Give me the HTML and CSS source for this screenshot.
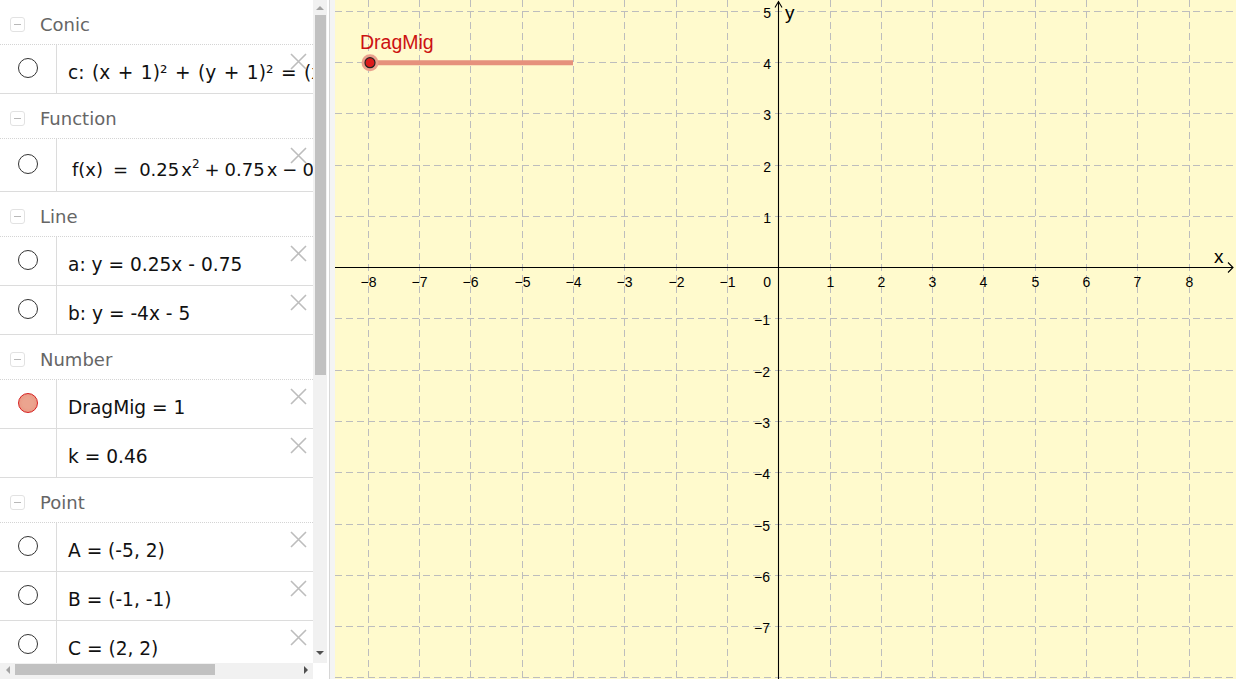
FILE: index.html
```html
<!DOCTYPE html>
<html>
<head>
<meta charset="utf-8">
<link rel="stylesheet" href="styles.css">
</head>
<body>
<div class="app">
  <div class="algebra">
    <div class="list">
      <div class="header"><span class="toggle"></span><span class="htext">Conic</span></div>
      <div class="item">
        <div class="mark"><span class="radio"></span></div>
        <div class="def wide">c: (x + 1)² + (y + 1)² = (x</div>
        <svg class="close" width="17" height="17" viewBox="0 0 17 17"><path d="M1 1L16 16M16 1L1 16"/></svg>
      </div>

      <div class="header"><span class="toggle"></span><span class="htext">Function</span></div>
      <div class="item tall">
        <div class="mark"><span class="radio"></span></div>
        <div class="def fx">f(x)<span class="eq">=</span>0.25<span class="th"></span>x<sup>2</sup><span class="op">+</span>0.75<span class="th"></span>x<span class="op">−</span>0.5</div>
        <svg class="close" width="17" height="17" viewBox="0 0 17 17"><path d="M1 1L16 16M16 1L1 16"/></svg>
      </div>

      <div class="header"><span class="toggle"></span><span class="htext">Line</span></div>
      <div class="item">
        <div class="mark"><span class="radio"></span></div>
        <div class="def">a: y = 0.25x - 0.75</div>
        <svg class="close" width="17" height="17" viewBox="0 0 17 17"><path d="M1 1L16 16M16 1L1 16"/></svg>
      </div>
      <div class="item">
        <div class="mark"><span class="radio"></span></div>
        <div class="def">b: y = -4x - 5</div>
        <svg class="close" width="17" height="17" viewBox="0 0 17 17"><path d="M1 1L16 16M16 1L1 16"/></svg>
      </div>

      <div class="header"><span class="toggle"></span><span class="htext">Number</span></div>
      <div class="item">
        <div class="mark"><span class="radio on"></span></div>
        <div class="def">DragMig = 1</div>
        <svg class="close" width="17" height="17" viewBox="0 0 17 17"><path d="M1 1L16 16M16 1L1 16"/></svg>
      </div>
      <div class="item">
        <div class="mark"></div>
        <div class="def">k = 0.46</div>
        <svg class="close" width="17" height="17" viewBox="0 0 17 17"><path d="M1 1L16 16M16 1L1 16"/></svg>
      </div>

      <div class="header"><span class="toggle"></span><span class="htext">Point</span></div>
      <div class="item">
        <div class="mark"><span class="radio"></span></div>
        <div class="def">A = (-5, 2)</div>
        <svg class="close" width="17" height="17" viewBox="0 0 17 17"><path d="M1 1L16 16M16 1L1 16"/></svg>
      </div>
      <div class="item">
        <div class="mark"><span class="radio"></span></div>
        <div class="def">B = (-1, -1)</div>
        <svg class="close" width="17" height="17" viewBox="0 0 17 17"><path d="M1 1L16 16M16 1L1 16"/></svg>
      </div>
      <div class="item">
        <div class="mark"><span class="radio"></span></div>
        <div class="def">C = (2, 2)</div>
        <svg class="close" width="17" height="17" viewBox="0 0 17 17"><path d="M1 1L16 16M16 1L1 16"/></svg>
      </div>
    </div>

    <div class="vscroll">
      <div class="abox"><span class="tri up"></span></div>
      <div class="vthumb"></div>
      <div class="spacer"></div>
      <div class="abox down-box"><span class="tri down"></span></div>
    </div>
    <div class="hscroll">
      <div class="hbox"><span class="tri left"></span></div>
      <div class="hthumb"></div>
      <div class="spacer"></div>
      <div class="hbox"><span class="tri right"></span></div>
    </div>
    <div class="corner"></div>
  </div>

  <div class="divider"></div>

  <div class="graph">
    <svg class="plane" width="901" height="679" viewBox="0 0 901 679">
      <rect x="0" y="0" width="901" height="679" fill="#fffacd"/>
      <g class="grid">
        <line x1="33.5" y1="0" x2="33.5" y2="679"/>
        <line x1="84.5" y1="0" x2="84.5" y2="679"/>
        <line x1="135.5" y1="0" x2="135.5" y2="679"/>
        <line x1="187.5" y1="0" x2="187.5" y2="679"/>
        <line x1="238.5" y1="0" x2="238.5" y2="679"/>
        <line x1="289.5" y1="0" x2="289.5" y2="679"/>
        <line x1="341.5" y1="0" x2="341.5" y2="679"/>
        <line x1="392.5" y1="0" x2="392.5" y2="679"/>
        <line x1="495.5" y1="0" x2="495.5" y2="679"/>
        <line x1="546.5" y1="0" x2="546.5" y2="679"/>
        <line x1="597.5" y1="0" x2="597.5" y2="679"/>
        <line x1="648.5" y1="0" x2="648.5" y2="679"/>
        <line x1="700.5" y1="0" x2="700.5" y2="679"/>
        <line x1="751.5" y1="0" x2="751.5" y2="679"/>
        <line x1="802.5" y1="0" x2="802.5" y2="679"/>
        <line x1="854.5" y1="0" x2="854.5" y2="679"/>
        <line x1="0" y1="11.5" x2="901" y2="11.5"/>
        <line x1="0" y1="62.5" x2="901" y2="62.5"/>
        <line x1="0" y1="113.5" x2="901" y2="113.5"/>
        <line x1="0" y1="165.5" x2="901" y2="165.5"/>
        <line x1="0" y1="216.5" x2="901" y2="216.5"/>
        <line x1="0" y1="318.5" x2="901" y2="318.5"/>
        <line x1="0" y1="370.5" x2="901" y2="370.5"/>
        <line x1="0" y1="421.5" x2="901" y2="421.5"/>
        <line x1="0" y1="472.5" x2="901" y2="472.5"/>
        <line x1="0" y1="524.5" x2="901" y2="524.5"/>
        <line x1="0" y1="575.5" x2="901" y2="575.5"/>
        <line x1="0" y1="626.5" x2="901" y2="626.5"/>
        <line x1="0" y1="677.5" x2="901" y2="677.5"/>
      </g>
      <g class="axes">
        <line x1="0" y1="267.5" x2="898" y2="267.5"/>
        <line x1="443.5" y1="1.5" x2="443.5" y2="679"/>
        <polyline points="893,262.5 898,267.5 893,272.5"/>
        <polyline points="440,7.5 443.5,1.5 447,7.5"/>
      </g>
      <g class="xlab">
        <text x="33.5" y="287">−8</text>
        <text x="84.5" y="287">−7</text>
        <text x="135.5" y="287">−6</text>
        <text x="187.5" y="287">−5</text>
        <text x="238.5" y="287">−4</text>
        <text x="289.5" y="287">−3</text>
        <text x="341.5" y="287">−2</text>
        <text x="392.5" y="287">−1</text>
        <text x="495.5" y="287">1</text>
        <text x="546.5" y="287">2</text>
        <text x="597.5" y="287">3</text>
        <text x="648.5" y="287">4</text>
        <text x="700.5" y="287">5</text>
        <text x="751.5" y="287">6</text>
        <text x="802.5" y="287">7</text>
        <text x="854.5" y="287">8</text>
      </g>
      <g class="ylab">
        <text x="436" y="287">0</text>
        <text x="436" y="17.5">5</text>
        <text x="436" y="68.5">4</text>
        <text x="436" y="119.5">3</text>
        <text x="436" y="171.5">2</text>
        <text x="436" y="222.5">1</text>
        <text x="435" y="324.5">−1</text>
        <text x="435" y="376.5">−2</text>
        <text x="435" y="427.5">−3</text>
        <text x="435" y="478.5">−4</text>
        <text x="435" y="530.5">−5</text>
        <text x="435" y="581.5">−6</text>
        <text x="435" y="632.5">−7</text>
      </g>
      <text class="axname" x="879" y="263">x</text>
      <text class="axname" x="450" y="19">y</text>

      <line class="slider" x1="35" y1="62.7" x2="238" y2="62.7"/>
      <circle cx="35" cy="62.7" r="8.5" fill="#eaa08c"/>
      <circle cx="35" cy="62.7" r="5" fill="#dc1c1c" stroke="#222" stroke-width="1.2"/>
      <text class="slabel" x="25" y="48.5">DragMig</text>
    </svg>
  </div>
</div>
</body>
</html>
```

FILE: styles.css
```css
* { box-sizing: border-box; }
html, body { margin: 0; padding: 0; }
body {
  width: 1236px;
  height: 679px;
  overflow: hidden;
  background: #fff;
  font-family: "DejaVu Sans", sans-serif;
}
.app {
  display: flex;
  width: 1236px;
  height: 679px;
}
.algebra {
  display: grid;
  grid-template-columns: 313px 14px;
  grid-template-rows: 663px 16px;
  width: 327px;
  height: 679px;
  flex: none;
}
.list {
  overflow: hidden;
  background: #fff;
}
.header {
  height: 45px;
  padding-top: 14px;
  display: flex;
  align-items: flex-start;
  border-bottom: 1px dotted #d4d4d4;
}
.toggle {
  width: 15px;
  height: 15px;
  margin: 3px 0 0 10px;
  border: 1px solid #e2e2e2;
  border-radius: 3px;
  position: relative;
  flex: none;
}
.toggle::after {
  content: "";
  position: absolute;
  left: 3px;
  top: 6px;
  width: 7px;
  height: 1px;
  background: #b8b8b8;
}
.htext {
  margin-left: 15px;
  font-size: 18px;
  line-height: 22px;
  color: #666;
}
.item {
  position: relative;
  display: flex;
  height: 49px;
  border-bottom: 1px solid #dcdcdc;
}
.item.tall { height: 53px; }
.mark {
  width: 57px;
  flex: none;
  border-right: 1px solid #dcdcdc;
  padding: 13px 0 0 18px;
}
.item.tall .mark { padding-top: 15px; }
.radio {
  display: block;
  width: 20px;
  height: 20px;
  border: 1.3px solid #333;
  border-radius: 50%;
  background: #fff;
}
.radio.on {
  background: radial-gradient(circle, #eba48f 0 40%, #e8907c 100%);
  border-color: #d62020;
}
.def {
  flex: 1;
  min-width: 0;
  padding: 17px 0 0 11px;
  font-size: 18.6px;
  line-height: 22px;
  color: #111;
  white-space: nowrap;
  overflow: hidden;
}
.def.wide { word-spacing: 1.6px; }
.def.fx { padding: 20px 0 0 15px; font-size: 18px; }
.eq { margin: 0 11px 0 10px; }
.op { margin: 0 5px; }
.th { display: inline-block; width: 2px; }
sup { font-size: 12px; line-height: 0; vertical-align: 8px; }
.close {
  position: absolute;
  right: 6px;
  top: 8px;
}
.close path {
  stroke: #bdbdbd;
  stroke-width: 1.6;
  fill: none;
}
.vscroll {
  background: #f1f1f1;
  display: flex;
  flex-direction: column;
}
.abox {
  height: 15px;
  display: flex;
  justify-content: center;
  align-items: center;
  flex: none;
}
.down-box { height: 17px; padding-bottom: 3px; }
.vthumb {
  width: 11px;
  height: 360px;
  margin-left: 2px;
  background: #c1c1c1;
  flex: none;
}
.spacer { flex: 1; }
.hscroll {
  background: #f1f1f1;
  display: flex;
  align-items: flex-start;
}
.hbox {
  width: 15px;
  height: 14px;
  display: flex;
  justify-content: center;
  align-items: center;
  flex: none;
}
.hthumb {
  width: 200px;
  height: 11px;
  margin-top: 1px;
  background: #c1c1c1;
  flex: none;
}
.corner { background: #fff; }
.tri { width: 0; height: 0; display: block; }
.tri.up { border-left: 4px solid transparent; border-right: 4px solid transparent; border-bottom: 4px solid #a3a3a3; }
.tri.down { border-left: 4px solid transparent; border-right: 4px solid transparent; border-top: 4px solid #505050; }
.tri.left { border-top: 4px solid transparent; border-bottom: 4px solid transparent; border-right: 4px solid #a3a3a3; }
.tri.right { border-top: 4px solid transparent; border-bottom: 4px solid transparent; border-left: 4px solid #505050; }
.divider {
  width: 8px;
  flex: none;
  background: #f4f4f4;
  border-left: 2px solid #fff;
  box-shadow: inset 1px 0 0 #d6d6d6;
}
.graph {
  flex: 1;
  overflow: hidden;
}
.plane { display: block; }
.grid line {
  stroke: #bdbdbd;
  stroke-width: 1;
  stroke-dasharray: 7 4;
}
.axes line, .axes polyline {
  stroke: #000;
  stroke-width: 1.1;
  fill: none;
}
.xlab text, .ylab text {
  font-family: "Liberation Sans", Arial, sans-serif;
  font-size: 14px;
  fill: #000;
}
.xlab text { text-anchor: middle; }
.ylab text { text-anchor: end; }
.axname {
  font-family: "Liberation Sans", Arial, sans-serif;
  font-size: 19px;
  fill: #000;
}
.slider {
  stroke: #e6917c;
  stroke-width: 5;
}
.slabel {
  font-family: "Liberation Sans", Arial, sans-serif;
  font-size: 19.5px;
  fill: #cc1111;
}
```
